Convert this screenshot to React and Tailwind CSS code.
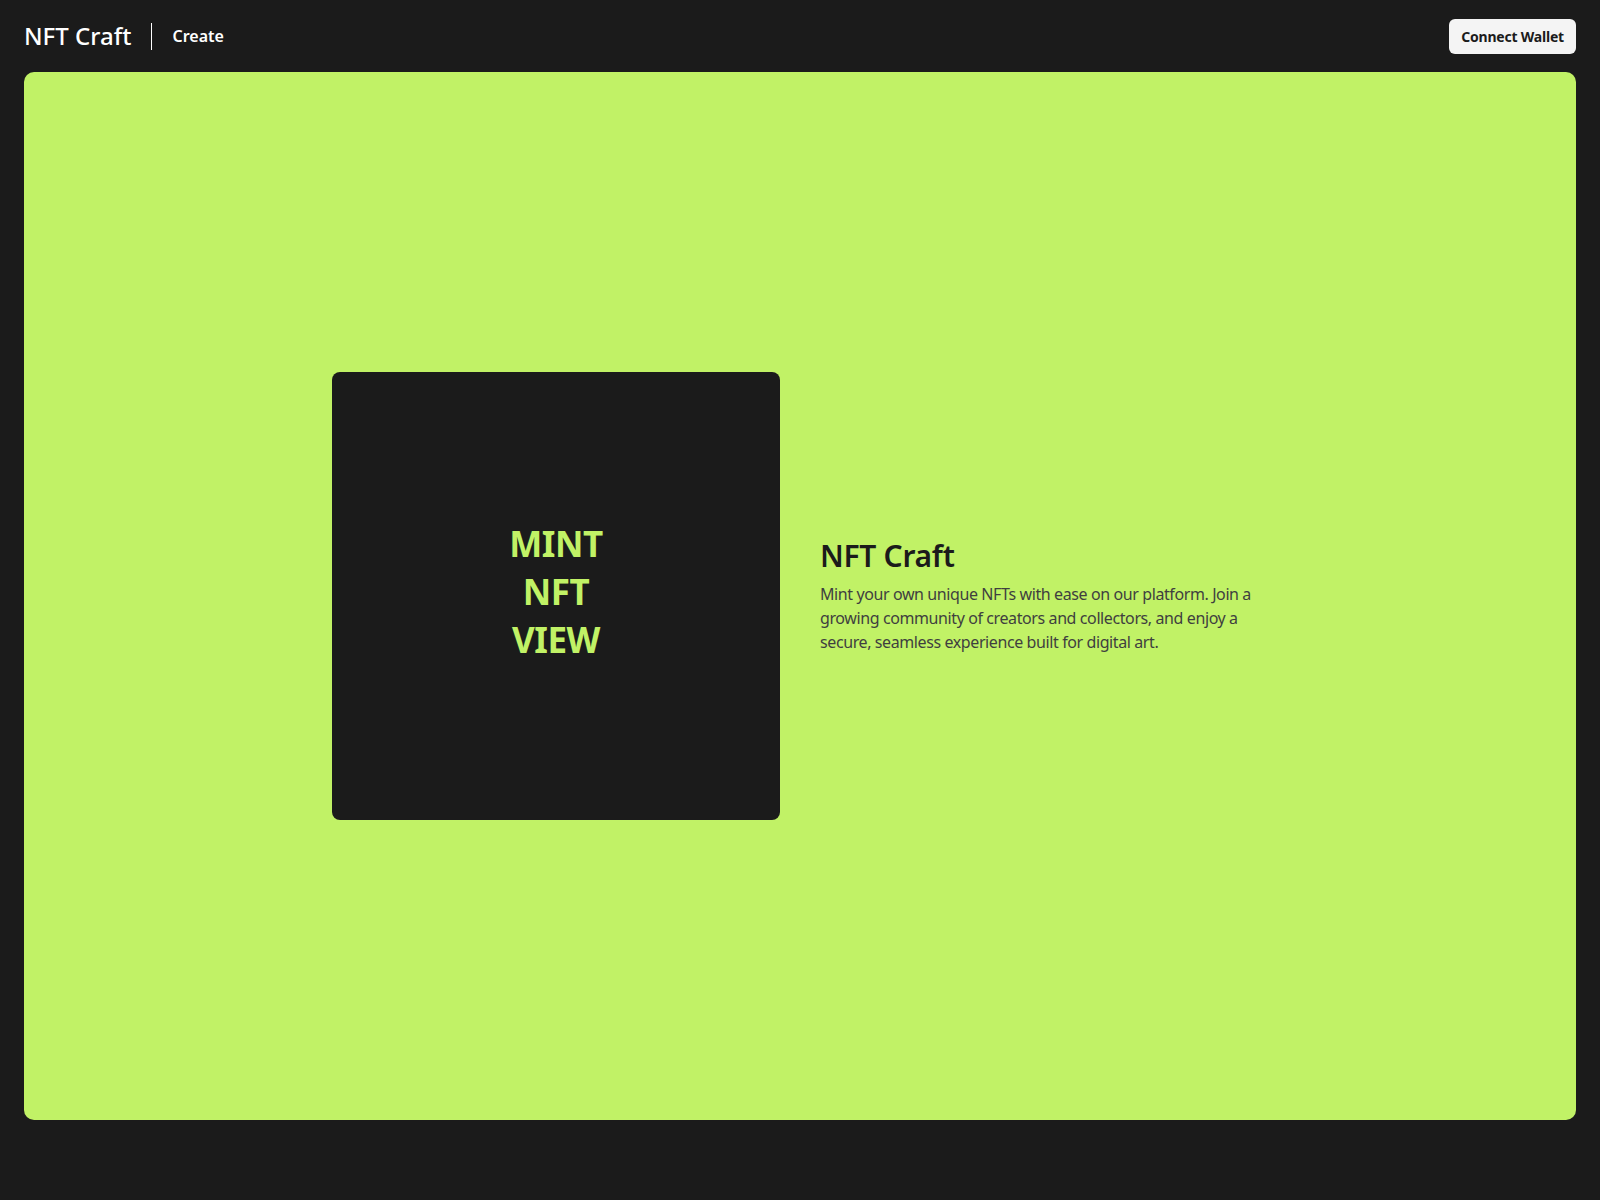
import React from 'react'

const App = () => {
  return (
    <div className="min-h-[1200px] bg-[#1b1b1b] font-['Noto_Sans',sans-serif]">
      {/* header */}
      <div className="h-[72px] px-6 flex items-center justify-between">
        <div className="flex items-center gap-5">
          <h1 className="text-[24px] leading-[32px] font-medium text-white">NFT Craft</h1>
          <div className="w-px h-[27px] bg-white" />
          <a className="text-[16px] leading-[24px] font-semibold text-white" href="#">Create</a>
        </div>
        <button className="h-[35px] px-3 rounded-md bg-[#f4f4f4] text-[14px] font-bold tracking-[-0.2px] text-[#1b1b1b]">Connect Wallet</button>
      </div>

      {/* main panel */}
      <div className="px-6">
        <div className="h-[1048px] rounded-[10px] bg-[#c1f266] flex items-center justify-center gap-10">
          <div className="w-[448px] h-[448px] rounded-lg bg-[#1b1b1b] flex items-center justify-center">
            <p className="text-[35px] leading-[48px] font-bold tracking-[-0.5px] text-[#c1f266] text-center mb-2">MINT<br />NFT<br />VIEW</p>
          </div>
          <div className="w-[448px]">
            <h2 className="text-[30px] leading-[36px] font-semibold tracking-[-0.3px] text-[#1b1b1b] pb-2">NFT Craft</h2>
            <p className="text-[16px] leading-[24px] tracking-[-0.4px] text-[#3f3f3f]">Mint your own unique NFTs with ease on our platform. Join a growing community of creators and collectors, and enjoy a secure, seamless experience built for digital art.</p>
          </div>
        </div>
      </div>
    </div>
  )
}

export default App
